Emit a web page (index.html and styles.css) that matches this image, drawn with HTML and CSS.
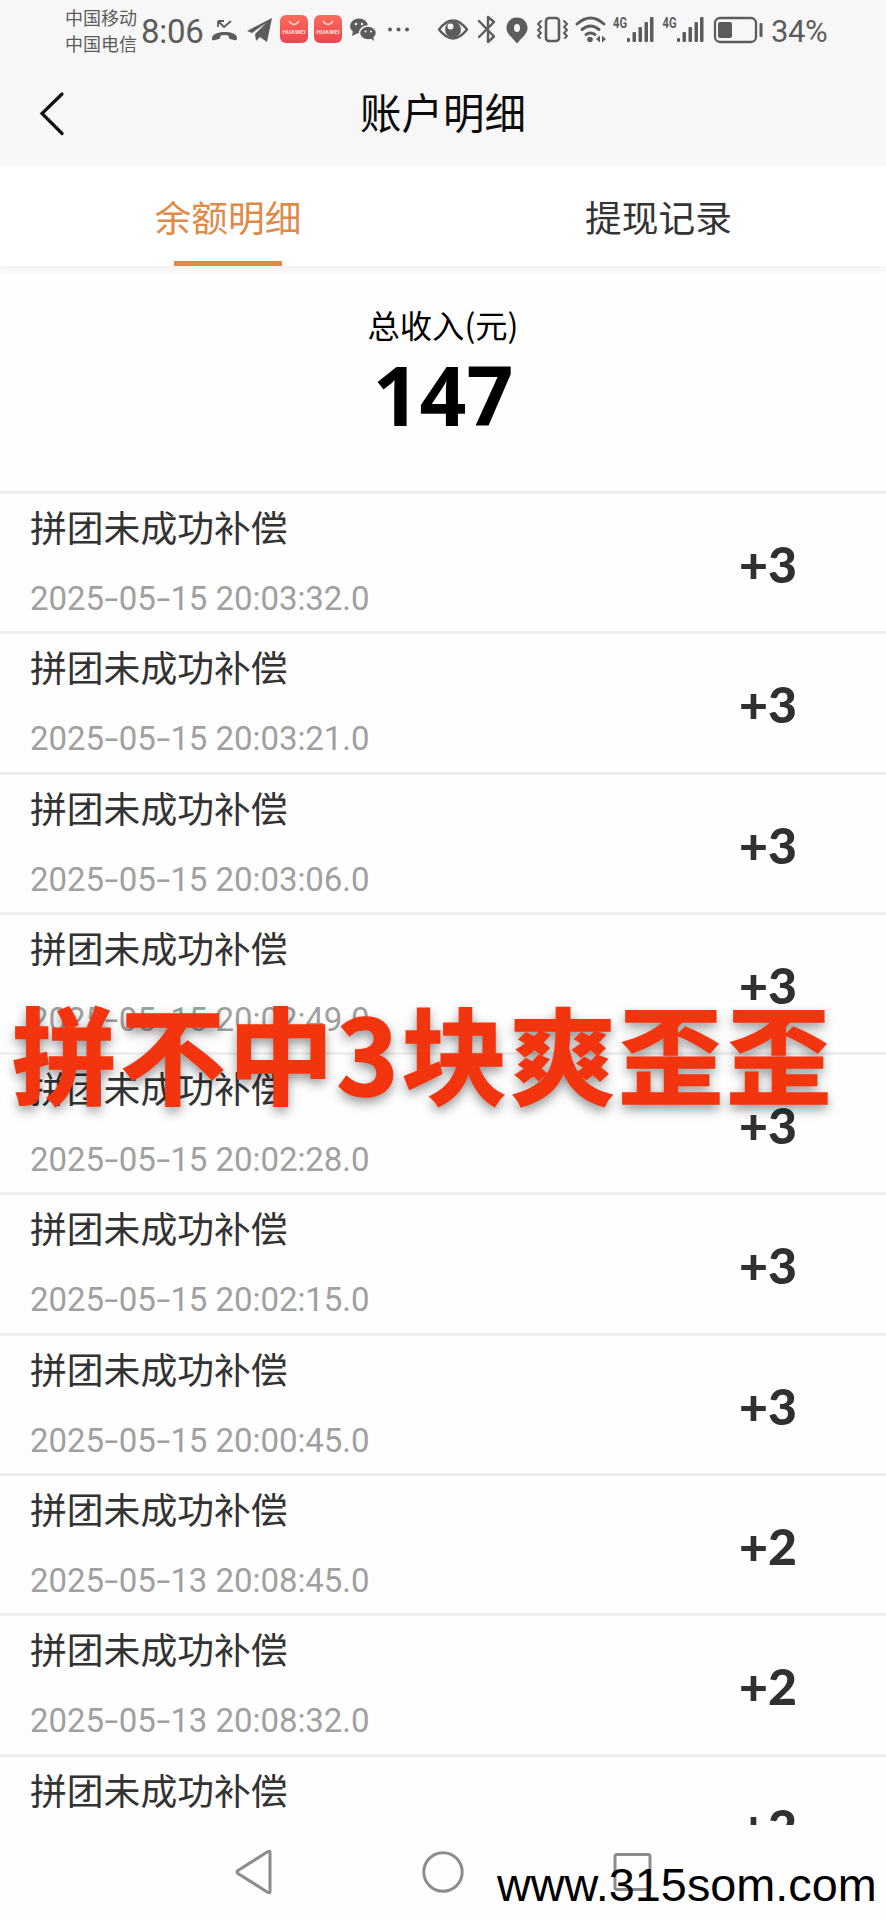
FILE: index.html
```html
<!DOCTYPE html>
<html lang="zh-CN">
<head>
<meta charset="utf-8">
<title>账户明细</title>
<link rel="stylesheet" href="styles.css">
</head>
<body>
<div class="phone">
  <header class="top">
    <div class="status">
      <div class="carriers"><span>中国移动</span><span>中国电信</span></div>
      <div class="clock">8:06</div>
      <svg class="icons" width="210" height="60" viewBox="205 0 210 60">
        <g fill="none" stroke="#5c5c5c" stroke-width="1.8"><path d="M218 21v6M218 21h6M218 21l6 6 7-6"/></g>
        <path fill="#5c5c5c" d="M212 39c-1-9 25-9 25-1 0 2-1 2.500-3 2l-4-1c-1.500-.5-1-3-2-3.500q-4-1-7 0c-1 .5-.5 3-2 3.500l-4 1c-2 .5-3 .5-3-1z"/>
        <path fill="#5c5c5c" d="M247 31L272 18L267 42L260 37L256 41L255 34L266 23L252 33z"/>
        <defs><linearGradient id="bag" x1="0" y1="0" x2="0" y2="1"><stop offset="0" stop-color="#fa6a5c"/><stop offset="1" stop-color="#ec4651"/></linearGradient></defs>
        <rect x="280" y="15" width="28" height="28" rx="6" fill="url(#bag)"/>
        <rect x="314" y="15" width="28" height="28" rx="6" fill="url(#bag)"/>
        <path d="M289 21q5 7 10 0M323 21q5 7 10 0" fill="none" stroke="#ffd0c8" stroke-width="1.500"/>
        <text class="brand" x="294" y="34" text-anchor="middle" textLength="23">HUAWEI</text>
        <text class="brand" x="328" y="34" text-anchor="middle" textLength="23">HUAWEI</text>
        <g fill="#5c5c5c">
          <ellipse cx="359" cy="26" rx="9" ry="7.500"/><path d="M353 31l-1 5 6-3z"/>
          <ellipse cx="368" cy="33" rx="8.500" ry="7" stroke="#f7f7f7" stroke-width="1.500"/><path d="M370 38l4 3-1-5z"/>
          <circle cx="390" cy="29.500" r="2"/><circle cx="398.500" cy="29.500" r="2"/><circle cx="407" cy="29.500" r="2"/>
        </g>
        <g fill="#f7f7f7"><circle cx="356" cy="24" r="1.200"/><circle cx="362" cy="24" r="1.200"/><circle cx="365.500" cy="31.500" r="1"/><circle cx="371" cy="31.500" r="1"/></g>
      </svg>
      <svg class="icons icons-right" width="330" height="60" viewBox="435 0 330 60">
        <g fill="none" stroke="#5c5c5c" stroke-width="2.400" stroke-linecap="round" stroke-linejoin="round">
          <path d="M439 29.500q14-18 28 0q-14 18-28 0z"/>
          <path d="M479 21l15 15.500-6 5.500V17l6 5-15 15"/>
          <rect x="546" y="18" width="13" height="23" rx="3" stroke-width="2.600"/>
          <path d="M541 21l-3 3 3 3-3 3 3 3-3 3 2 2M564 21l3 3-3 3 3 3-3 3 3 3-2 2" stroke-width="2"/>
          <path d="M577 24q13.500-12 27 0M582 29.500q8.500-7 17 0M586 34.500q4.500-3 9 0" stroke-width="3"/>
          <rect x="715" y="18" width="41" height="24" rx="5" stroke-width="2.300"/>
        </g>
        <g fill="#5c5c5c">
          <circle cx="453" cy="29.500" r="8"/>
          <path fill-rule="evenodd" d="M517 17.500c-6 0-10.500 4.500-10.500 10.500 0 6 6 10 10.500 15.500 4.500-5.500 10.500-9.500 10.500-15.500 0-6-4.500-10.500-10.500-10.500zm0 6.500a3 4 0 1 1 0 8 3 4 0 1 1 0-8z"/>
          <circle cx="590" cy="39.500" r="2.800"/>
          <path d="M596 39l4-3.500v7zM606 39l-4-3.500v7z"/>
          <rect x="627" y="38" width="3" height="4" rx="1"/><rect x="632.500" y="32" width="3.500" height="10" rx="1"/><rect x="638.500" y="27" width="3.500" height="15" rx="1"/><rect x="644.500" y="22" width="3.500" height="20" rx="1"/><rect x="650" y="17" width="3.500" height="25" rx="1"/>
          <rect x="677" y="38" width="3" height="4" rx="1"/><rect x="682.500" y="32" width="3.500" height="10" rx="1"/><rect x="688.500" y="27" width="3.500" height="15" rx="1"/><rect x="694.500" y="22" width="3.500" height="20" rx="1"/><rect x="700" y="17" width="3.500" height="25" rx="1"/>
          <rect x="718" y="22" width="14" height="16" rx="2"/><rect x="759.500" y="23" width="3" height="14" rx="1"/>
        </g>
        <circle cx="450.500" cy="26.500" r="3" fill="#f7f7f7"/>
        <text class="net" x="613" y="27.500" textLength="14" lengthAdjust="spacingAndGlyphs">4G</text>
        <text class="net" x="662.500" y="27.500" textLength="14" lengthAdjust="spacingAndGlyphs">4G</text>
      </svg>
      <div class="percent">34%</div>
    </div>
    <div class="titlebar">
      <svg class="back" width="26" height="44" viewBox="0 0 26 44"><path d="M23 2L3 21.500L23 41.500" fill="none" stroke="#111" stroke-width="3.200" stroke-linecap="round"/></svg>
      <h1 class="title">账户明细</h1>
    </div>
  </header>
  <nav class="tabs">
    <div class="tab tab-active">余额明细</div>
    <div class="tab">提现记录</div>
  </nav>
  <section class="summary">
    <div class="summary-label">总收入(元)</div>
    <div class="summary-value">147</div>
  </section>
  <main class="list" id="list"></main>
  <footer class="navbar">
    <svg width="42" height="48" viewBox="0 0 42 48"><path d="M37 4.500v39q0 2-2 1L5 25.500q-2-1.500 0-3L35 3.500q2-1 2 1z"/></svg>
    <svg width="48" height="48" viewBox="0 0 48 48"><circle cx="24" cy="24" r="19.200"/></svg>
    <svg width="44" height="48" viewBox="0 0 44 48"><rect x="4" y="6.500" width="35" height="35" rx="2"/></svg>
  </footer>
  <div class="caption">拼不中3块爽歪歪</div>
  <div class="site">www.315som.com</div>
</div>
<script src="list.js"></script>
</body>
</html>
```
FILE: styles.css
```css
* { box-sizing: border-box; }
body {
  margin: 0;
  background: #fefefe;
  font-family: Roboto, "Noto Sans CJK SC", sans-serif;
  color: #333;
}
.phone {
  position: relative;
  width: 886px;
  height: 1920px;
  overflow: hidden;
  display: flex;
  flex-direction: column;
}
.top { height: 166px; background: #f7f7f7; flex: none; }
.status { display: flex; height: 60px; color: #5c5c5c; }
.carriers {
  display: flex;
  flex-direction: column;
  width: 76px;
  margin-left: 65px;
  padding-top: 4px;
  font: 18px/26px "Noto Sans CJK SC", sans-serif;
  white-space: nowrap;
}
.clock { width: 64px; font-size: 33px; line-height: 63px; white-space: nowrap; letter-spacing: -0.3px; }
.icons-right { margin-left: 20px; }
.brand { font: bold 6px Roboto, sans-serif; fill: #ffe0dc; }
.net { font: bold 15px Roboto, sans-serif; fill: #5c5c5c; }
.percent { margin-left: 6px; font-size: 31px; line-height: 63px; letter-spacing: -0.4px; }
.titlebar {
  display: grid;
  grid-template-columns: 1fr auto 1fr;
  align-items: center;
  height: 106px;
}
.back { margin: 2px 0 0 39px; }
.title {
  margin: -4px 0 0;
  font: 400 41.5px/60px "Noto Sans CJK SC", sans-serif;
  color: #0c0c0c;
}
.tabs {
  display: flex;
  flex: none;
  height: 100px;
  background: #fff;
  box-shadow: 0 5px 7px #f2f2f2;
}
.tab {
  width: 50%;
  display: flex;
  flex-direction: column;
  align-items: center;
  padding: 23px 12px 0 0;
  font: 36.700px/54px "Noto Sans CJK SC", sans-serif;
}
.tab-active { padding: 23px 0 0 13px; color: #df8a49; }
.tab-active::after { content: ""; width: 108px; height: 5px; margin-top: 18px; background: #df8a49; }
.summary {
  flex: none;
  display: flex;
  flex-direction: column;
  align-items: center;
  height: 225px;
  padding-top: 34px;
  color: #000;
}
.summary-label { font: 32.300px/48px "Noto Sans CJK SC", sans-serif; }
.summary-value { font: 700 82px/92px "Noto Sans", sans-serif; }
.list { flex: none; height: 1334px; overflow: hidden; }
.row {
  display: flex;
  justify-content: space-between;
  height: 140.300px;
  padding: 0 89px 0 30px;
  border-top: 3px solid #efefef;
}
.row-name { padding-top: 5px; font: 36.800px/54px "Noto Sans CJK SC", sans-serif; }
.row-time { margin-top: 26px; font-size: 33px; line-height: 40px; color: #a0a0a0; white-space: nowrap; letter-spacing: -0.050px; }
.dash { display: inline-block; width: 14.700px; text-align: center; transform: scaleX(1.500); }
.amount { padding-top: 40px; font: 900 50px/60px Lato, sans-serif; color: #303030; }
.navbar {
  flex: 1;
  display: flex;
  align-items: flex-start;
  gap: 144px;
  padding: 23px 0 0 233px;
}
.navbar svg { fill: none; stroke: #8c8c8c; stroke-width: 3; }
.caption {
  position: absolute;
  left: 12px;
  top: 974px;
  font: 700 105px/152px "Noto Sans CJK SC", sans-serif;
  letter-spacing: 3.200px;
  white-space: nowrap;
  color: #f3350f;
  -webkit-text-stroke: 1.500px #f3350f;
  text-shadow: 0 5px 12px rgba(0, 0, 0, 0.45);
}
.site {
  position: absolute;
  left: 497px;
  top: 1858px;
  font: 46.800px/54px "Liberation Sans", Arial, sans-serif;
  color: #000;
}
```
FILE: list.js
```javascript
const records = [
  ["2025-05-15 20:03:32.0", "+3"],
  ["2025-05-15 20:03:21.0", "+3"],
  ["2025-05-15 20:03:06.0", "+3"],
  ["2025-05-15 20:02:49.0", "+3"],
  ["2025-05-15 20:02:28.0", "+3"],
  ["2025-05-15 20:02:15.0", "+3"],
  ["2025-05-15 20:00:45.0", "+3"],
  ["2025-05-13 20:08:45.0", "+2"],
  ["2025-05-13 20:08:32.0", "+2"],
  ["", "+2"]
];
document.getElementById("list").innerHTML = records.map(([time, amount]) => `
  <div class="row">
    <div>
      <div class="row-name">拼团未成功补偿</div>
      <div class="row-time">${time.replace(/-/g, '<span class="dash">-</span>')}</div>
    </div>
    <div class="amount">${amount}</div>
  </div>`).join("");
```
